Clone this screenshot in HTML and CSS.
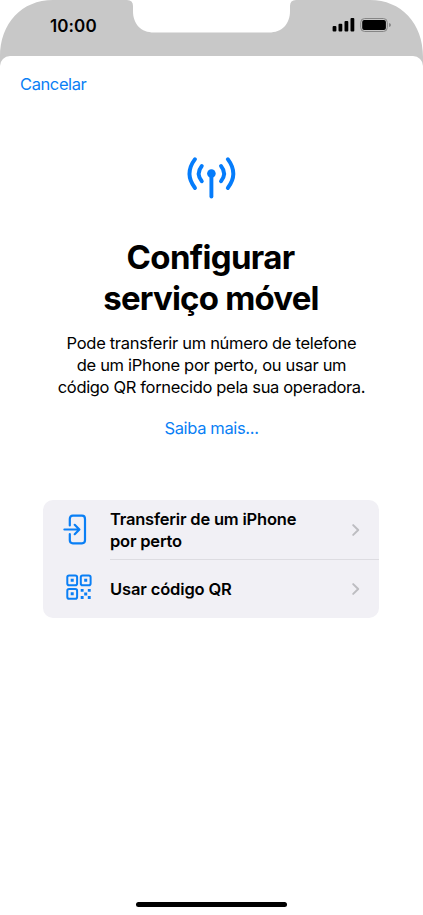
FILE: index.html
```html
<!DOCTYPE html>
<html lang="pt">
<head>
<meta charset="utf-8">
<title>Configurar serviço móvel</title>
<link rel="stylesheet" href="styles.css">
</head>
<body>
<div class="screen">
  <header class="status">
    <svg class="status-shape" width="423" height="80" viewBox="0 0 423 80" aria-hidden="true">
      <path fill="#c8c8c8" d="M0 80V57C0 23 22 0 53 0H127Q133 0 133 6V11C133 24 141 32.500 154 32.500H269C282 32.500 290 24 290 11V6Q290 0 296 0H370C401 0 423 23 423 57V80Z"/>
    </svg>
    <span class="time">10:00</span>
    <svg class="indicators" width="60" height="16" viewBox="0 0 60 16" aria-hidden="true">
      <rect x="0.600" y="10" width="3.800" height="5.600" rx="1"/>
      <rect x="6.500" y="7.800" width="3.800" height="7.800" rx="1"/>
      <rect x="12.500" y="4.900" width="3.800" height="10.700" rx="1"/>
      <rect x="18.500" y="2" width="3.800" height="13.600" rx="1"/>
      <rect x="28.700" y="2.500" width="26.600" height="13" rx="4" fill="none" stroke="#858585"/>
      <rect x="30.200" y="4" width="23.700" height="10" rx="2"/>
      <path d="M57 7Q59 7.500 59 9T57 11Z" fill="#858585"/>
    </svg>
  </header>
  <main class="sheet">
    <nav class="nav"><a class="link cancel">Cancelar</a></nav>
    <svg class="antenna" width="50" height="44" viewBox="0 0 50 44" aria-hidden="true">
      <g fill="none" stroke="#057cfb" stroke-width="3.900" stroke-linecap="round">
        <path d="M9 3.200Q-2 17.800 9 32M41.800 3.200Q52.800 17.800 41.800 32"/>
        <path d="M15.800 10Q9.600 17.600 15.800 25.200M35 10Q41.200 17.600 35 25.200"/>
        <path d="M25.400 18V40.500"/>
      </g>
      <circle cx="25.400" cy="17.500" r="4.300" fill="#057cfb"/>
    </svg>
    <h1 class="title"><span class="t1">Configurar</span><span class="t2">serviço móvel</span></h1>
    <p class="intro"><span class="i1">Pode transferir um número de telefone</span><span class="i2">de um iPhone por perto, ou usar um</span><span class="i3">código QR fornecido pela sua operadora.</span></p>
    <a class="link more">Saiba mais...</a>
    <section class="card">
      <div class="row">
        <svg class="icon" width="32" height="32" viewBox="0 0 32 32" fill="none" stroke="#0a7ff5" stroke-width="2.200" stroke-linecap="round" stroke-linejoin="round" aria-hidden="true">
          <path d="M9.800 11.400V5Q9.800 1.700 12.800 1.700H22Q25 1.700 25 5V26.300Q25 29.300 22 29.300H12.800Q9.800 29.300 9.800 26.300V20.200"/>
          <path d="M4.400 15.500H19M14.700 10.800L19.400 15.500L14.700 20.200"/>
        </svg>
        <div class="label"><span class="r1">Transferir de um iPhone</span><span class="r2">por perto</span></div>
        <svg class="chevron" width="9" height="14" viewBox="0 0 9 14" aria-hidden="true"><path d="M2.200 2.100L7.200 7L2.200 11.900"/></svg>
      </div>
      <div class="row second">
        <svg class="icon" width="32" height="32" viewBox="0 0 32 32" aria-hidden="true">
          <g transform="translate(1.900 -1.800)">
            <g fill="none" stroke="#0a7ff5" stroke-width="2">
              <rect x="5.400" y="4.200" width="9.800" height="9.800" rx="1.800"/>
              <rect x="18.900" y="4.200" width="9.800" height="9.800" rx="1.800"/>
              <rect x="5.400" y="17.700" width="9.800" height="9.800" rx="1.800"/>
            </g>
            <path fill="#0a7ff5" d="M8.800 7.600h3v3h-3zM22.300 7.600h3v3h-3zM8.800 21.100h3v3h-3zM18.800 17.700h2.900v2.900h-2.900zM25.900 17.700h2.900v2.900h-2.900zM22.300 21.200h3v3h-3zM18.800 24.800h2.900v2.900h-2.900zM25.900 24.800h2.900v2.900h-2.900z"/>
          </g>
        </svg>
        <div class="label"><span class="r3">Usar código QR</span></div>
        <svg class="chevron" width="9" height="14" viewBox="0 0 9 14" aria-hidden="true"><path d="M2.200 2.100L7.200 7L2.200 11.900"/></svg>
      </div>
    </section>
    <div class="home-bar"></div>
  </main>
</div>
</body>
</html>
```
FILE: styles.css
```css
* { box-sizing: border-box; }
body { margin: 0; background: #fff; color: #000; font-family: Inter, "Liberation Sans", sans-serif; }
h1, p { margin: 0; }
svg { display: block; flex: none; overflow: visible; }
.screen { width: 423px; height: 915px; overflow: hidden; display: flex; flex-direction: column; }
.status { position: relative; height: 56px; flex: none; display: flex; justify-content: space-between; padding: 16px 31px 0 50px; }
.status-shape { position: absolute; left: 0; top: 0; }
.time { position: relative; font-size: 17px; line-height: 20px; font-weight: 600; letter-spacing: 0.1px; }
.indicators { position: relative; }
.sheet { position: relative; flex: 1; background: #fff; border-radius: 10px 10px 0 0; display: flex; flex-direction: column; align-items: center; }
.nav { width: 100%; height: 56px; padding: 17px 20px 0; }
.link { color: #0a7ff5; font-size: 16.5px; line-height: 22px; }
.nav .link { display: block; }
.cancel { letter-spacing: -0.4px; }
.antenna { margin-top: 44px; margin-right: 1px; }
.title { margin-top: 37px; font-size: 33px; line-height: 41px; font-weight: 700; text-align: center; }
.title span, .intro span, .label span { display: block; white-space: nowrap; }
.title .t1 { letter-spacing: -0.67px; margin-right: 2px; }
.title .t2 { letter-spacing: -0.8px; margin-right: 1px; }
.intro { margin-top: 13px; font-size: 16.5px; line-height: 22px; text-align: center; }
.intro span { letter-spacing: -0.31px; }
.intro .i3 { letter-spacing: -0.34px; }
.more { margin-top: 19px; letter-spacing: -0.35px; }
.card { width: 336px; height: 118px; margin-top: 61px; margin-right: 1px; border-radius: 10px; background: #f1f0f5; }
.row { position: relative; height: 59px; display: flex; align-items: center; padding: 0 19px 0 17px; }
.icon { margin-right: 18px; }
.label { flex: 1; font-size: 16.5px; line-height: 22px; font-weight: 600; letter-spacing: -0.2px; }
.r3 { letter-spacing: -0.14px; }
.second::before { content: ""; position: absolute; left: 67px; right: 0; top: 0; height: 1px; background: #dddce1; }
.chevron { fill: none; stroke: #bdbdc1; stroke-width: 2; stroke-linecap: round; stroke-linejoin: round; }
.home-bar { width: 151px; height: 5px; margin-top: auto; margin-bottom: 8px; border-radius: 3px; background: #000; }
```
